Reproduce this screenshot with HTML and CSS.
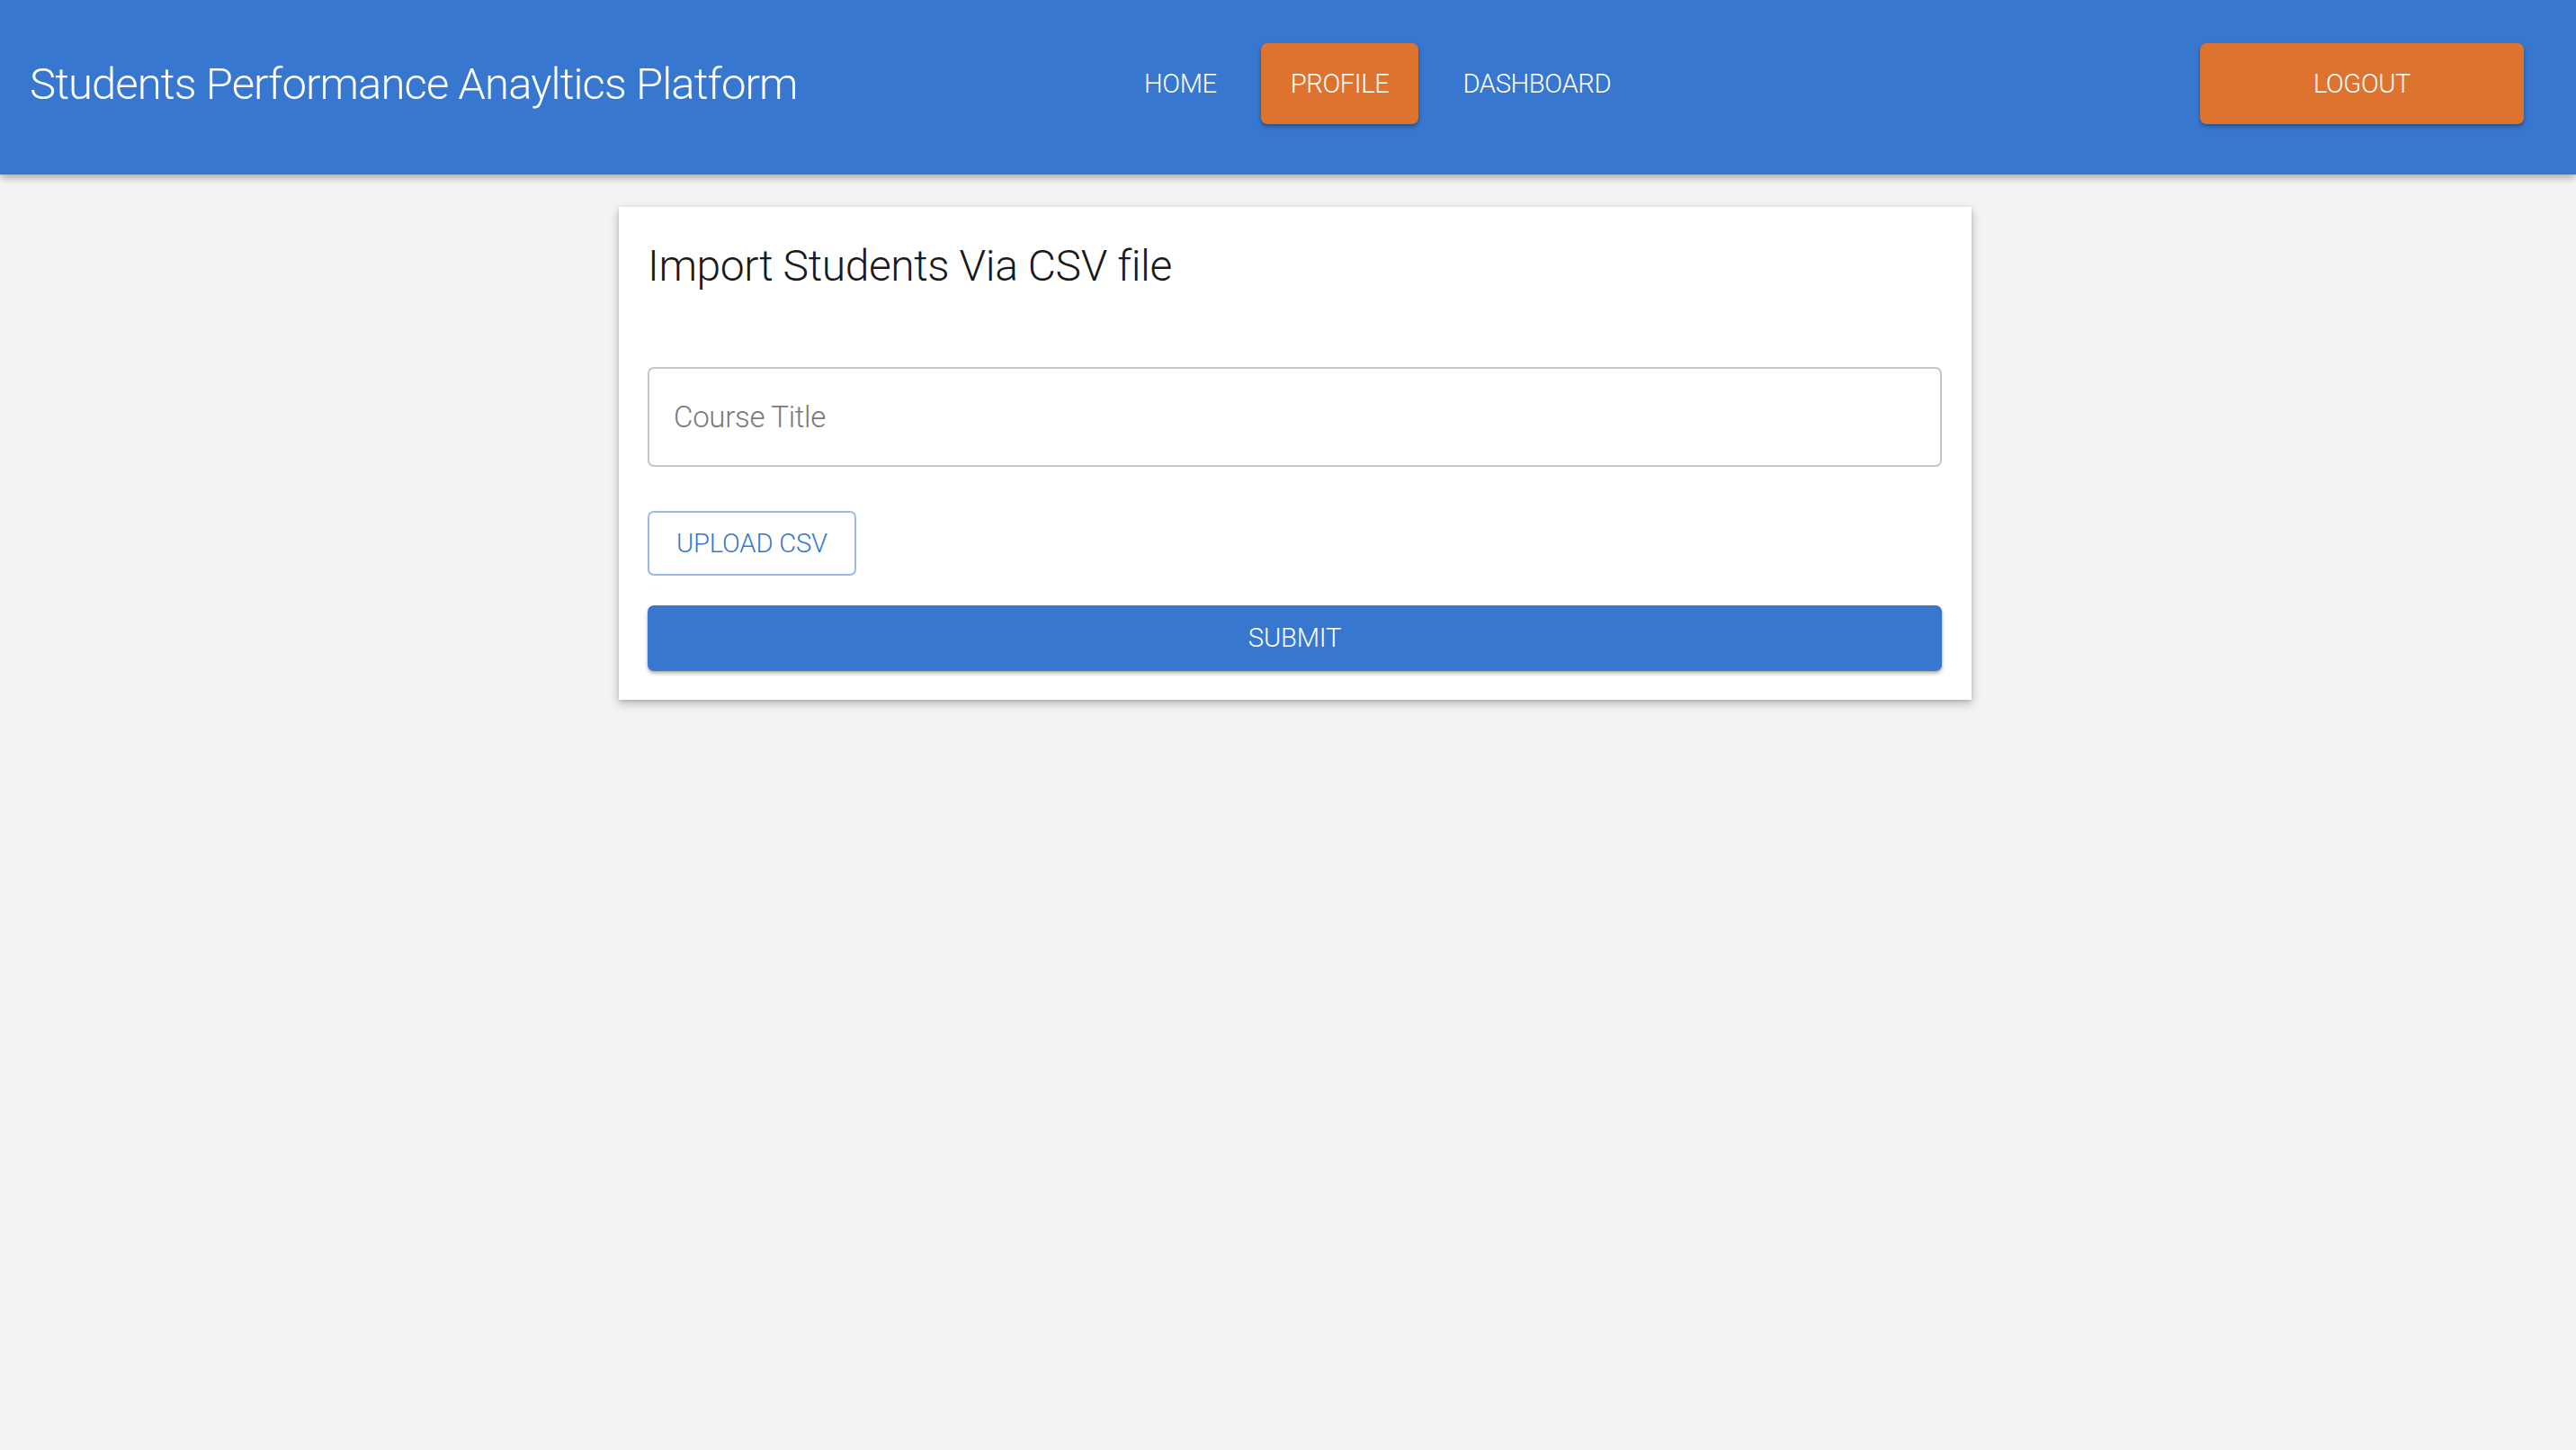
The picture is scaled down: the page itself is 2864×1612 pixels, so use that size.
FILE: index.html
```html
<!DOCTYPE html>
<html lang="en">
<head>
<meta charset="utf-8">
<title>Students Performance Anayltics Platform</title>
<link rel="stylesheet" href="styles.css">
</head>
<body>
<header class="topbar">
  <div class="brand">Students Performance Anayltics Platform</div>
  <nav class="nav">
    <a class="nav-btn">Home</a>
    <a class="nav-btn nav-btn-active">Profile</a>
    <a class="nav-btn">Dashboard</a>
  </nav>
  <div class="spacer"></div>
  <a class="logout-btn">Logout</a>
</header>
<main class="page">
  <section class="card">
    <h2 class="card-title">Import Students Via CSV file</h2>
    <input class="text-input" type="text" placeholder="Course Title">
    <div class="upload-row">
      <button class="upload-btn" type="button">Upload CSV</button>
    </div>
    <button class="submit-btn" type="button">Submit</button>
  </section>
</main>
</body>
</html>
```

FILE: styles.css
```css
html, body {
  margin: 0;
  padding: 0;
}
body {
  background: #f3f3f3;
  font-family: Roboto, "Liberation Sans", sans-serif;
  min-height: 1612px;
}
.topbar {
  box-sizing: border-box;
  height: 194px;
  padding: 48px 58px 56px 33px;
  background: #3777cf;
  display: flex;
  align-items: center;
  box-shadow: 0 4px 8px rgba(0, 0, 0, 0.28);
  position: relative;
  z-index: 1;
}
.brand {
  flex: 0 0 1206px;
  color: #fff;
  font-size: 49px;
  font-weight: 300;
  letter-spacing: -0.9px;
  line-height: 1;
  white-space: nowrap;
}
.nav {
  display: flex;
  gap: 16px;
}
.nav-btn, .logout-btn {
  box-sizing: border-box;
  height: 90px;
  display: flex;
  align-items: center;
  justify-content: center;
  padding: 0 33px;
  border-radius: 7px;
  color: #fff;
  font-size: 29.2px;
  font-weight: 300;
  text-transform: uppercase;
  letter-spacing: -0.4px;
  cursor: pointer;
}
.nav-btn-active, .logout-btn {
  background: #dd732f;
  box-shadow: 0 3px 4px rgba(0, 0, 0, 0.25), 0 1px 2px rgba(0, 0, 0, 0.15);
}
.spacer {
  flex: 1;
}
.logout-btn {
  width: 360px;
  padding: 0;
}
.page {
  padding-top: 36px;
}
.card {
  box-sizing: border-box;
  width: 1504px;
  margin-left: calc(50% - 744px);
  background: #fff;
  padding: 37px 33px 32px 32px;
  box-shadow: 0 4px 10px rgba(0, 0, 0, 0.25), 0 1px 3px rgba(0, 0, 0, 0.12);
  display: flex;
  flex-direction: column;
}
.card-title {
  margin: 0 0 83px;
  font-size: 48px;
  font-weight: 300;
  letter-spacing: -0.4px;
  line-height: 1.2;
  color: #1a1a1a;
}
.text-input {
  box-sizing: border-box;
  height: 111px;
  width: 100%;
  margin: 0;
  border: 2px solid #c6c6c6;
  border-radius: 7px;
  padding: 0 27px;
  font-family: Roboto, "Liberation Sans", sans-serif;
  font-size: 33px;
  font-weight: 300;
  letter-spacing: -0.3px;
  color: #222;
  outline: none;
  background: #fff;
}
.text-input::placeholder {
  color: #7a7a7a;
}
.upload-row {
  display: flex;
  margin-top: 49px;
}
.upload-btn {
  box-sizing: border-box;
  width: 232px;
  height: 72px;
  border: 2px solid #9bb9e6;
  border-radius: 7px;
  background: #fff;
  color: #3777cf;
  font-family: Roboto, "Liberation Sans", sans-serif;
  font-size: 29.2px;
  font-weight: 300;
  text-transform: uppercase;
  letter-spacing: -0.2px;
  padding: 0;
  cursor: pointer;
}
.submit-btn {
  box-sizing: border-box;
  margin-top: 33px;
  height: 73px;
  width: 100%;
  border: none;
  border-radius: 7px;
  background: #3777cf;
  color: #fff;
  font-family: Roboto, "Liberation Sans", sans-serif;
  font-size: 29.2px;
  font-weight: 300;
  text-transform: uppercase;
  letter-spacing: -0.2px;
  box-shadow: 0 3px 4px rgba(0, 0, 0, 0.25), 0 1px 2px rgba(0, 0, 0, 0.15);
  cursor: pointer;
}
```
